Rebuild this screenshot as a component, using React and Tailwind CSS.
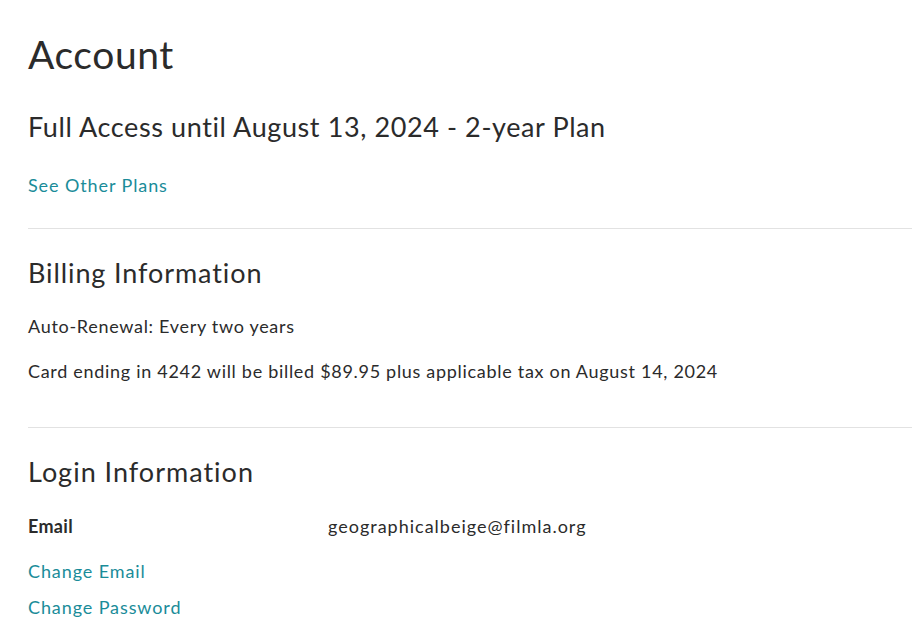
import React from "react";

function Divider() {
  return <hr className="border-0 border-t border-[#e2e2e2]" />;
}

const heading = "text-[27px] leading-[36px] font-normal";
const body = "text-[18px] leading-[24px] tracking-[0.7px]";
const link = "text-[#1a8c99] tracking-[0.9px] hover:underline";

function App() {
  return (
    <div className="min-h-screen bg-white text-[#2b2b2b] font-['Lato',sans-serif]">
      <div className="pl-7 pr-2 pt-[30px]">
        <h1 className="text-[39px] leading-[48px] tracking-[0.6px] font-normal">Account</h1>

        <section className="pb-[31px]">
          <h2 className={`mt-[31px] tracking-[0.6px] ${heading}`}>
            Full Access until August 13, 2024 - 2-year Plan
          </h2>
          <a href="#" className={`block mt-[28px] ${body} ${link}`}>
            See Other Plans
          </a>
        </section>

        <Divider />

        <section className="pb-[44px]">
          <h2 className={`mt-[26px] tracking-[0.9px] ${heading}`}>Billing Information</h2>
          <p className={`mt-[23px] ${body}`}>Auto-Renewal: Every two years</p>
          <p className={`mt-[21px] ${body}`}>
            Card ending in 4242 will be billed $89.95 plus applicable tax on August 14, 2024
          </p>
        </section>

        <Divider />

        <section>
          <h2 className={`mt-[26px] tracking-[1px] ${heading}`}>Login Information</h2>
          <div className={`mt-[24px] grid grid-cols-[300px_1fr] ${body}`}>
            <span className="font-bold tracking-[0.3px]">Email</span>
            <span className="tracking-[1px]">geographicalbeige@filmla.org</span>
          </div>
          <div className={`mt-[21px] flex flex-col gap-[12px] ${body}`}>
            <a href="#" className={link}>Change Email</a>
            <a href="#" className={link}>Change Password</a>
          </div>
        </section>
      </div>
    </div>
  );
}

export default App;
